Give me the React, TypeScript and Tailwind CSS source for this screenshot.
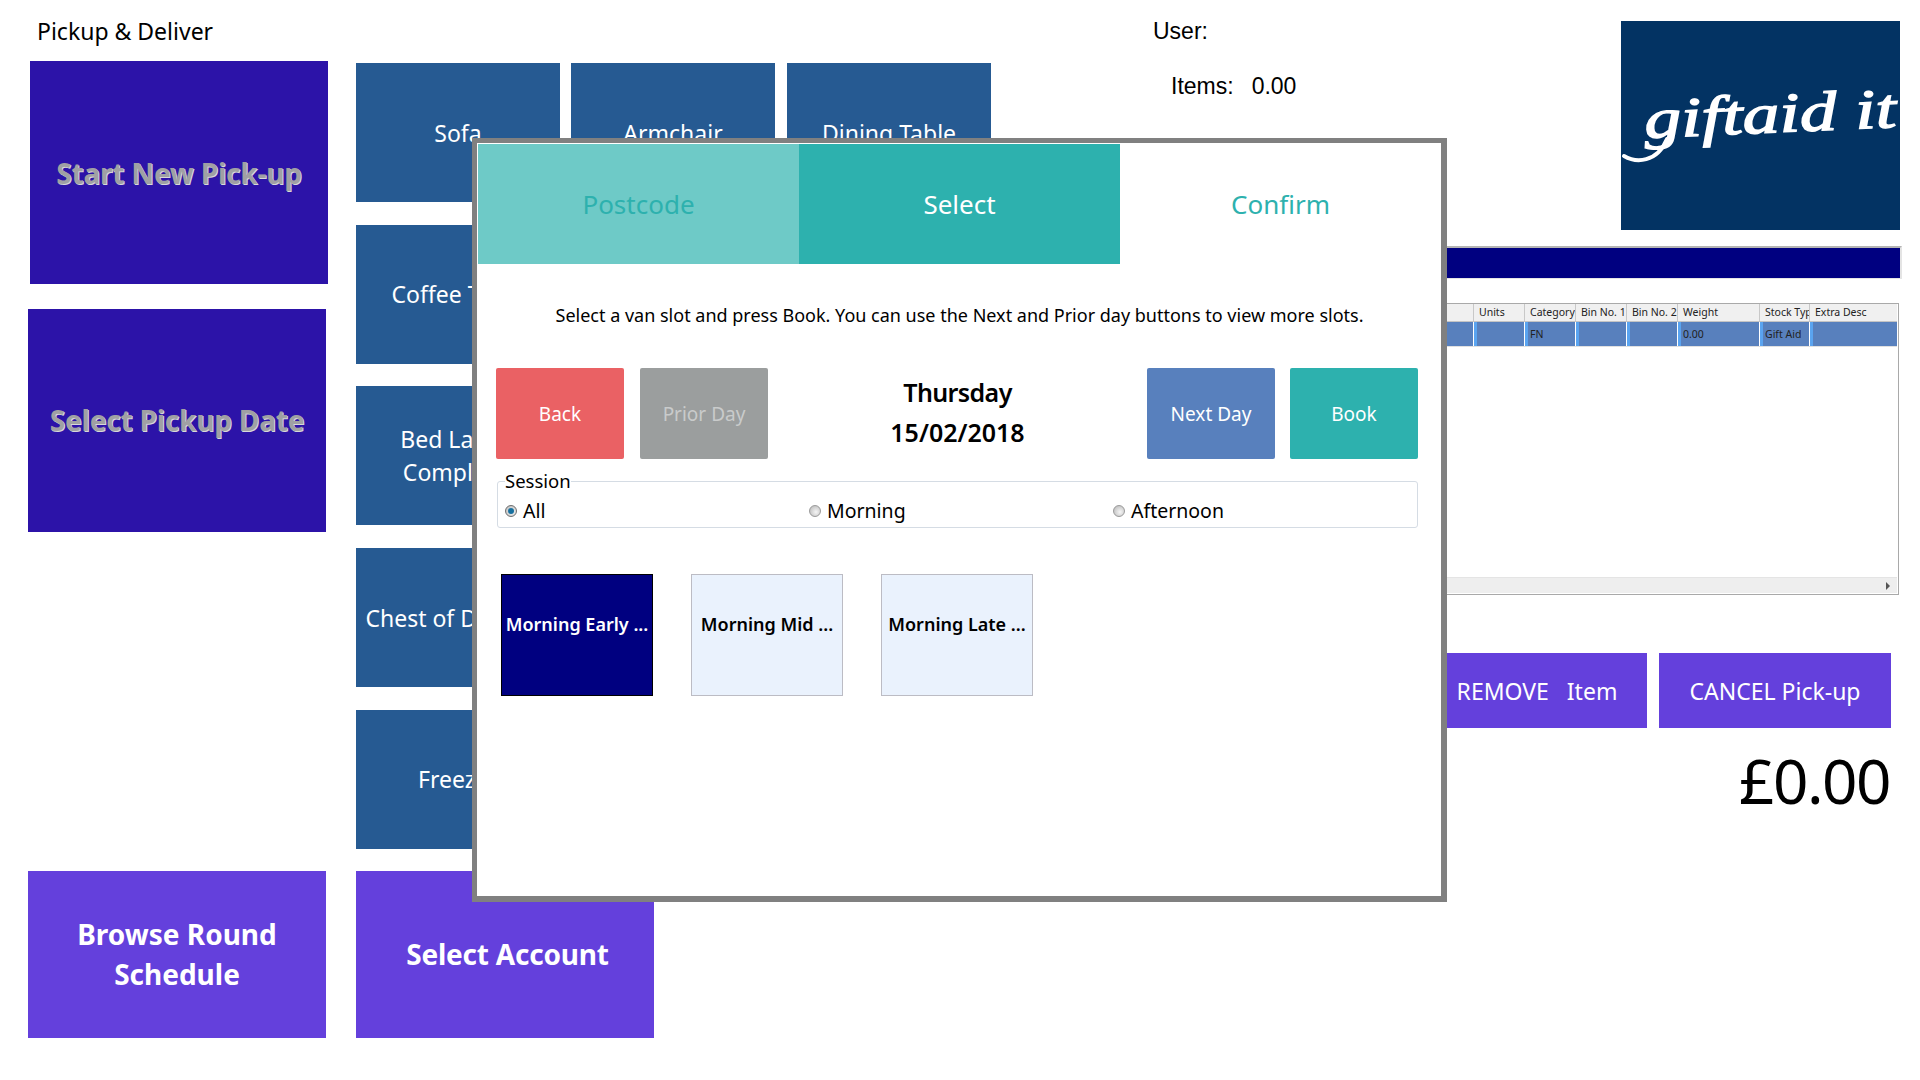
const FONT = "font-['Noto_Sans',sans-serif]"

const tileRows = [
    { name: "Sofa", label: "" },
    { name: "Coffee Table", label: "" },
    { name: "Bed Large Complete", label: "w-[116px] pr-[6px]" },
    { name: "Chest of Drawers", label: "" },
    { name: "Freezer", label: "" },
]

const gridColumns = [
    { name: "Units", width: "w-[51px]", value: "" },
    { name: "Category", width: "w-[51px]", value: "FN" },
    { name: "Bin No. 1", width: "w-[51px]", value: "" },
    { name: "Bin No. 2", width: "w-[51px]", value: "" },
    { name: "Weight", width: "w-[82px]", value: "0.00" },
    { name: "Stock Type", width: "w-[50px]", value: "Gift Aid" },
    { name: "Extra Desc", width: "w-[88px]", value: "" },
]

const Radio = ({ checked }: { checked?: boolean }) => (
    <span
        className={`flex h-[12px] w-[12px] shrink-0 items-center justify-center rounded-full border bg-[radial-gradient(circle_at_60%_60%,#f6f6f6,#b4b4b4)] ${
            checked ? "border-[#6f6f6f]" : "border-[#9a9a9a]"
        }`}
    >
        {checked && <span className="h-[6px] w-[6px] rounded-full bg-[#16709f]" />}
    </span>
)

const GiftAidLogo = () => (
    <div className="h-[209px] w-[279px] bg-[#033363]">
        <svg viewBox="0 0 279 209" className="h-full w-full">
            <text
                x="24"
                y="117"
                fill="#fff"
                stroke="#fff"
                strokeWidth="1.4"
                fontFamily="Liberation Serif, serif"
                fontStyle="italic"
                fontSize="56"
                textLength="252"
                lengthAdjust="spacingAndGlyphs"
                transform="rotate(-2.5 24 117)"
            >
                giftaid it
            </text>
            <path d="M3 135 C15 142 36 142 46 118" fill="none" stroke="#fff" strokeWidth="4" strokeLinecap="round" />
        </svg>
    </div>
)

const Dialog = () => (
    <div className="absolute left-[472px] top-[138px] flex h-[764px] w-[975px] flex-col border-[#808080] border-t-[5px] border-l-[5px] border-r-[6px] border-b-[6px] bg-white pl-px pt-px">
        <div className="grid h-[120px] shrink-0 grid-cols-3 text-[26px]">
            <div className="flex items-center justify-center bg-[#6ecac7] text-[#2db1ae]">Postcode</div>
            <div className="flex items-center justify-center bg-[#2db1ae] text-white">Select</div>
            <div className="flex items-center justify-center bg-white text-[#2db1ae]">Confirm</div>
        </div>
        <p className="mt-[39px] text-center text-[18px] leading-[24px] text-black">
            Select a van slot and press Book. You can use the Next and Prior day buttons to view more slots.
        </p>
        <div className="mt-[41px] flex h-[91px] pl-[18px] pr-[23px] text-[19px]">
            <div className="flex w-[128px] items-center justify-center rounded-[2px] bg-[#ea6164] pt-px text-white">Back</div>
            <div className="ml-[16px] flex w-[128px] items-center justify-center rounded-[2px] bg-[#9b9e9e] pt-px text-[#c9cbcb]">
                Prior Day
            </div>
            <div className="flex flex-1 flex-col items-center justify-center pb-[3px] text-[25px] font-semibold leading-[40px] text-black">
                <span className="tracking-[-0.6px]">Thursday</span>
                <span>15/02/2018</span>
            </div>
            <div className="flex w-[128px] items-center justify-center rounded-[2px] bg-[#5880bd] pt-px text-white">Next Day</div>
            <div className="ml-[15px] flex w-[128px] items-center justify-center rounded-[2px] bg-[#2db1ae] pt-px text-white">Book</div>
        </div>
        <fieldset className="ml-[19px] mr-[23px] mt-[10px] h-[59px] rounded-[3px] border border-[#d5dce4] px-[7px]">
            <legend className="px-0 text-[18.5px] leading-[24px] text-black">Session</legend>
            <div className="mt-[6px] grid grid-cols-[304px_304px_1fr] text-[19.5px] leading-[24px] text-black">
                <label className="flex items-center gap-[6px]">
                    <Radio checked />
                    All
                </label>
                <label className="flex items-center gap-[6px]">
                    <Radio />
                    Morning
                </label>
                <label className="flex items-center gap-[6px]">
                    <Radio />
                    Afternoon
                </label>
            </div>
        </fieldset>
        <div className="ml-[23px] mt-[46px] flex gap-[38px] text-[18px] font-semibold">
            <div className="flex h-[122px] w-[152px] items-center justify-center whitespace-nowrap border border-black bg-[#000080] pb-[22px] text-white">
                Morning Early ...
            </div>
            <div className="flex h-[122px] w-[152px] items-center justify-center whitespace-nowrap border border-[#bcbcc4] bg-[#eaf2fd] pb-[22px] text-black">
                Morning Mid ...
            </div>
            <div className="flex h-[122px] w-[152px] items-center justify-center whitespace-nowrap border border-[#bcbcc4] bg-[#eaf2fd] pb-[22px] text-black">
                Morning Late ...
            </div>
        </div>
    </div>
)

const App = () => {
    return (
        <div className={`relative flex h-[1080px] w-[1920px] overflow-hidden bg-white ${FONT}`}>
            <div className="ml-[28px] flex h-[1038px] w-[300px] shrink-0 flex-col">
                <div className="ml-[9px] mt-[14px] h-[47px] text-[23px] leading-[34px] text-black">Pickup &amp; Deliver</div>
                <div className="ml-[2px] flex h-[223px] w-[298px] items-center justify-center bg-[#2c13a8] text-[28px] font-bold tracking-[-0.2px] text-[#a0a0a4] [text-shadow:1px_1px_0_#d8d8d8]">
                    Start New Pick-up
                </div>
                <div className="mt-[25px] flex h-[223px] w-[298px] items-center justify-center bg-[#2c13a8] pb-px text-[28px] font-bold tracking-[-0.2px] text-[#a0a0a4] [text-shadow:1px_1px_0_#d8d8d8]">
                    Select Pickup Date
                </div>
                <div className="mt-auto flex h-[167px] w-[298px] items-center justify-center bg-[#6440dc] px-6 pb-px text-center text-[28px] font-bold leading-[40px] text-white">
                    Browse Round Schedule
                </div>
            </div>

            <div className="ml-[28px] flex h-[1038px] w-[635px] shrink-0 flex-col pt-[63px]">
                <div className="flex flex-col gap-[22.7px]">
                    {tileRows.map((tile, index) => (
                        <div key={tile.name} className="flex h-[139px] text-[23px] leading-[33px] text-white">
                            <div className="flex w-[204px] items-center justify-center bg-[#265a92] pt-px text-center">
                                <span className={tile.label}>{tile.name}</span>
                            </div>
                            {index === 0 && (
                                <>
                                    <div className="ml-[11px] flex w-[204px] items-center justify-center bg-[#265a92] pt-px">Armchair</div>
                                    <div className="ml-[12px] flex w-[204px] items-center justify-center bg-[#265a92] pt-px">Dining Table</div>
                                </>
                            )}
                        </div>
                    ))}
                </div>
                <div className="mt-auto flex h-[167px] w-[298px] items-center justify-center bg-[#6440dc] pb-px pl-[5px] text-[28px] font-bold tracking-[-0.2px] text-white">
                    Select Account
                </div>
            </div>

            <div className="flex w-[929px] shrink-0 flex-col pr-[20px]">
                <div className="flex h-[246px] shrink-0 justify-between pt-[21px]">
                    <div className="ml-[162px] font-['Liberation_Sans',sans-serif] text-[23px] leading-[28px] text-black">
                        <div className="-mt-[4px]">User:</div>
                        <div className="ml-[18px] mt-[27px] flex gap-[18px]">
                            <span>Items:</span>
                            <span>0.00</span>
                        </div>
                    </div>
                    <GiftAidLogo />
                </div>
                <div className="-mr-[2px] h-[33px] shrink-0 border-t-2 border-r-2 border-b border-[#b4b4b4] border-r-[#e4e4e4] border-b-[#e4e4e4] bg-[#000080]" />

                <div className="ml-[108px] mt-[24px] flex h-[292px] w-[800px] shrink-0 flex-col border border-[#a9a9a9] pb-px pr-px text-[10.5px] leading-[16px] text-[#222]">
                    <div className="flex h-[18px] shrink-0 justify-end border-b border-[#c4c4c4] bg-[#f0f0f0]">
                        {gridColumns.map((col) => (
                            <div key={col.name} className={`${col.width} overflow-hidden whitespace-nowrap border-l border-[#c8c8c8] pl-[5px]`}>
                                {col.name}
                            </div>
                        ))}
                    </div>
                    <div className="flex h-[25px] shrink-0 justify-end border-b border-[#e0e0e0] bg-[#5880bd]">
                        {gridColumns.map((col) => (
                            <div key={col.name} className={`${col.width} flex items-center border-l border-white`}>
                                <span className="h-full w-[3px] shrink-0 bg-[#5aa4f0]" />
                                <span className="overflow-hidden whitespace-nowrap pl-[2px]">{col.value}</span>
                            </div>
                        ))}
                    </div>
                    <div className="mt-auto flex h-[16px] shrink-0 items-center justify-end border-t border-[#e4e4e4] bg-[#eeeeee] pr-[7px]">
                        <span className="h-0 w-0 border-y-[4px] border-l-[4px] border-y-transparent border-l-[#555]" />
                    </div>
                </div>

                <div className="mt-[58px] flex h-[75px] shrink-0 justify-end gap-[12px] pr-[9px] text-[23px] text-white">
                    <div className="flex w-[220px] items-center justify-center whitespace-pre bg-[#6440dc] pt-px">REMOVE   Item</div>
                    <div className="flex w-[232px] items-center justify-center bg-[#6440dc] pt-px">CANCEL Pick-up</div>
                </div>
                <div className="mt-[12px] pr-[10px] text-right text-[62px] leading-[80px] tracking-[-1.5px] text-black">£0.00</div>
            </div>

            <Dialog />
        </div>
    )
}

export default App
